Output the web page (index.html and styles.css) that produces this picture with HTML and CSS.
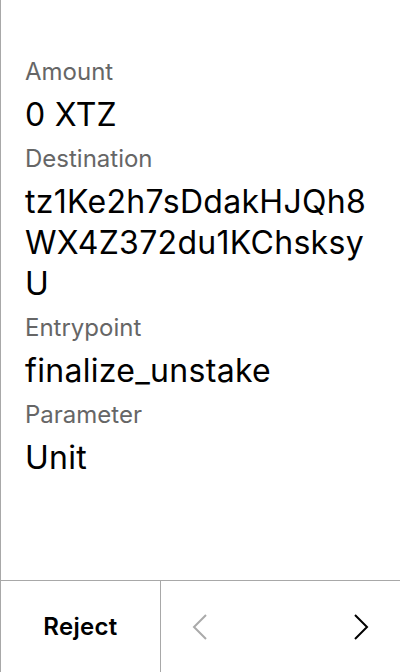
FILE: index.html
```html
<!DOCTYPE html>
<html>
<head>
<meta charset="utf-8">
<link rel="stylesheet" href="styles.css">
</head>
<body>
<div class="screen">
  <main class="content">
    <div class="field">
      <div class="label">Amount</div>
      <div class="value">0 XTZ</div>
    </div>
    <div class="field">
      <div class="label">Destination</div>
      <div class="value">tz1Ke2h7sDdakHJQh8WX4Z372du1KChsksyU</div>
    </div>
    <div class="field">
      <div class="label">Entrypoint</div>
      <div class="value">finalize_unstake</div>
    </div>
    <div class="field">
      <div class="label">Parameter</div>
      <div class="value">Unit</div>
    </div>
  </main>
  <footer class="footer">
    <div class="reject">Reject</div>
    <div class="nav">
      <svg class="chev chev-prev" width="16" height="26" viewBox="0 0 16 26"><path d="M14 1 L2 13 L14 25" fill="none" stroke="currentColor" stroke-width="2"/></svg>
      <svg class="chev chev-next" width="16" height="26" viewBox="0 0 16 26"><path d="M2 1 L14 13 L2 25" fill="none" stroke="currentColor" stroke-width="2"/></svg>
    </div>
  </footer>
</div>
</body>
</html>
```
FILE: styles.css
```css
* { box-sizing: border-box; }
html, body { margin: 0; padding: 0; background: #fff; }
body { font-family: Inter, "Noto Sans", sans-serif; color: #000; }
.screen {
  width: 400px;
  height: 672px;
  border-left: 1px solid #a8a8a8;
  display: flex;
  flex-direction: column;
}
.content {
  flex: 1;
  padding: 58px 24px 0 24px;
  display: flex;
  flex-direction: column;
  gap: 10px;
}
.field {
  display: flex;
  flex-direction: column;
  gap: 8px;
}
.label {
  font-size: 24px;
  line-height: 28px;
  color: #666;
}
.value {
  font-size: 32px;
  line-height: 41px;
  letter-spacing: 0.3px;
  color: #000;
  word-break: break-all;
}
.footer {
  height: 92px;
  border-top: 1px solid #a8a8a8;
  display: flex;
}
.reject {
  width: 160px;
  border-right: 1px solid #a8a8a8;
  display: flex;
  align-items: center;
  justify-content: center;
  font-size: 24px;
  font-weight: 600;
  letter-spacing: 0.3px;
}
.nav {
  flex: 1;
  display: flex;
  align-items: center;
  justify-content: space-between;
  padding: 0 31px 0 31px;
}
.chev-prev { color: #aaa; }
.chev-next { color: #000; }
```
